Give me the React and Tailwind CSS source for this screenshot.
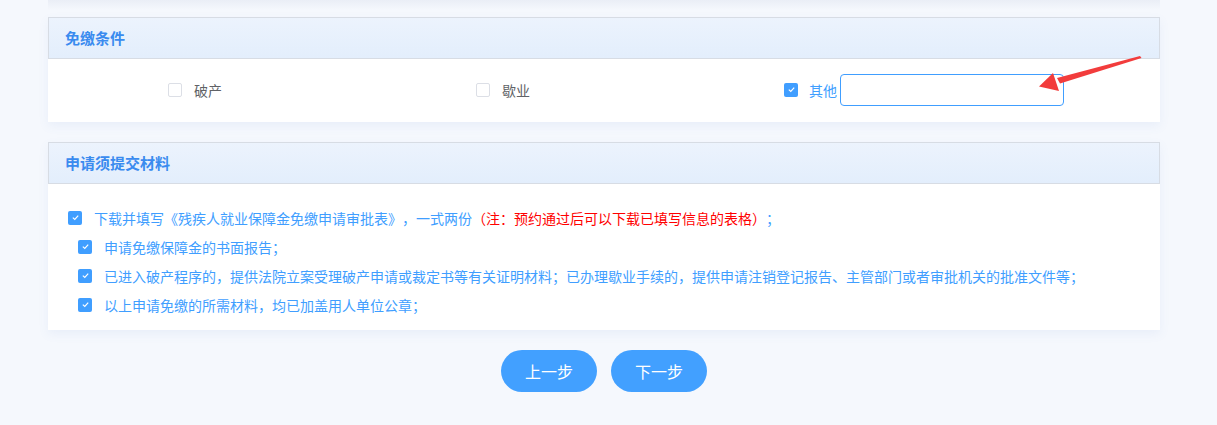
import React from "react";

function Box({ checked }) {
  return checked ? (
    <span className="w-[14px] h-[14px] rounded-[2px] bg-[#409eff] flex items-center justify-center shrink-0">
      <svg width="9" height="9" viewBox="0 0 10 10">
        <path d="M2 5.2 L4.2 7.2 L8 3" fill="none" stroke="white" strokeWidth="1.3" />
      </svg>
    </span>
  ) : (
    <span className="w-[14px] h-[14px] rounded-[2px] border border-[#dcdfe6] bg-white shrink-0" />
  );
}

function CardHead({ title }) {
  return (
    <div className="h-[42px] border border-[#d7dce4] bg-gradient-to-b from-[#ecf3fd] to-[#e3eefc] flex items-center pl-4">
      <span className="text-[15px] font-bold text-[#3a8bef]">{title}</span>
    </div>
  );
}

const rows = [
  "申请免缴保障金的书面报告；",
  "已进入破产程序的，提供法院立案受理破产申请或裁定书等有关证明材料；已办理歇业手续的，提供申请注销登记报告、主管部门或者审批机关的批准文件等；",
  "以上申请免缴的所需材料，均已加盖用人单位公章；",
];

export default function App() {
  return (
    <div
      className="relative w-[1217px] h-[425px] bg-[#f5f8fd] overflow-hidden [text-spacing-trim:space-all]"
      style={{ fontFamily: '"Microsoft YaHei", "Noto Sans CJK SC", sans-serif' }}
    >
      {/* shadow of card above */}
      <div className="ml-[48px] w-[1112px] h-[10px] bg-gradient-to-b from-[#eaeef6] to-[#f5f8fd]" />

      {/* 免缴条件 */}
      <div className="ml-[48px] w-[1112px] mt-[7px] bg-white shadow-[0_4px_10px_rgba(90,130,210,0.08)]">
        <CardHead title="免缴条件" />
        <div className="h-[63px] flex items-center pl-[120px] pb-[2px]">
          <label className="w-[308px] flex items-center gap-3 text-sm text-[#606266]">
            <Box />
            破产
          </label>
          <label className="w-[308px] flex items-center gap-3 text-sm text-[#606266]">
            <Box />
            歇业
          </label>
          <div className="flex items-center">
            <Box checked />
            <span className="ml-[11px] text-sm text-[#409eff]">其他</span>
            <input className="ml-[3px] w-[224px] h-[32px] rounded-[4px] border border-[#409eff] outline-none px-3 text-sm" />
          </div>
        </div>
      </div>

      {/* 申请须提交材料 */}
      <div className="ml-[48px] w-[1112px] mt-5 bg-white shadow-[0_4px_10px_rgba(90,130,210,0.08)]">
        <CardHead title="申请须提交材料" />
        <div className="pt-[19px] pb-[11px] pl-5 text-sm text-[#409eff]">
          <div className="h-[29px] flex items-center gap-3">
            <Box checked />
            <span>
              下载并填写《残疾人就业保障金免缴申请审批表》，一式两份
              <span className="text-[#ff0000]">（注：预约通过后可以下载已填写信息的表格）</span>；
            </span>
          </div>
          {rows.map((r) => (
            <div key={r} className="h-[29px] flex items-center gap-3 pl-[10px]">
              <Box checked />
              <span>{r}</span>
            </div>
          ))}
        </div>
      </div>

      <div className="ml-[48px] w-[1112px] mt-5 flex justify-center gap-[14px]">
        <button className="w-[96px] h-[42px] rounded-full bg-[#42a0ff] text-white text-base">上一步</button>
        <button className="w-[96px] h-[42px] rounded-full bg-[#42a0ff] text-white text-base">下一步</button>
      </div>

      {/* red annotation arrow */}
      <svg className="absolute left-0 top-0 pointer-events-none" width="1217" height="425">
        <polygon points="1140,56 1141.5,58 1060,83.5 1057,78" fill="#f23c3c" />
        <polygon points="1039,86.5 1053,73 1059,91" fill="#f23c3c" />
      </svg>
    </div>
  );
}
